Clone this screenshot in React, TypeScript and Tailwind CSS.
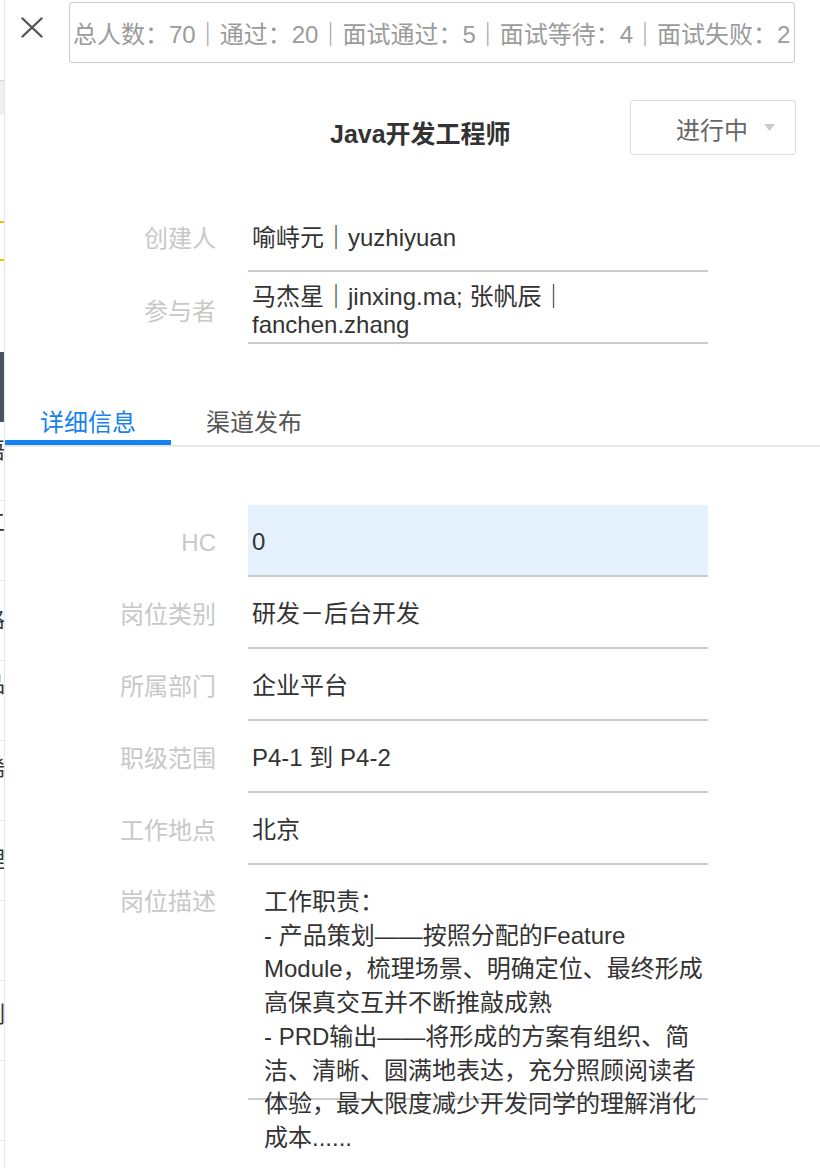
import React from 'react';

const FONT = "font-['Liberation_Sans','Noto_Sans_CJK_SC',sans-serif]";

// sliver of the page behind the drawer, only 4px of it shows
function BackdropStrip() {
  const rows = [
    { pt: 'pt-[18px]', ch: '语', h: 'h-[79px]' },
    { pt: 'pt-[11px]', ch: '工', h: 'h-[80px]' },
    { pt: 'pt-[28px]', ch: '路', h: 'h-[80px]' },
    { pt: 'pt-[13px]', ch: '品', h: 'h-[80px]' },
    { pt: 'pt-[18px]', ch: '稀', h: 'h-[80px]' },
    { pt: 'pt-[28px]', ch: '理', h: 'h-[80px]' },
    { pt: 'pt-[20px]', ch: '', h: 'h-[80px]' },
    { pt: 'pt-[23px]', ch: '列', h: 'h-[80px]' },
    { pt: 'pt-[20px]', ch: '', h: 'h-[80px]' },
  ];
  return (
    <div className="w-[4px] shrink-0 overflow-hidden flex flex-col text-[22px] leading-none text-[#333]">
      <div className="h-[80px] shrink-0" />
      <div className="h-[35px] shrink-0 border-t border-[#d4d4d4] bg-[#f0f0f0]" />
      <div className="h-[106px] shrink-0" />
      <div className="h-[2px] shrink-0 bg-[#f5c400]" />
      <div className="h-[36px] shrink-0" />
      <div className="h-[2px] shrink-0 bg-[#f5c400]" />
      <div className="h-[91px] shrink-0" />
      <div className="h-[70px] shrink-0 bg-[#4b5261]" />
      {rows.map((r, i) => (
        <div key={i} className={`${r.h} ${r.pt} shrink-0 border-b border-dashed border-[#e2e2e2] flex items-start`}>
          <span className="-ml-[17px] whitespace-nowrap">{r.ch}</span>
        </div>
      ))}
    </div>
  );
}

function Row({
  label,
  children,
  highlight,
  shift = 'pt-[3px]',
}: {
  label: string;
  children: React.ReactNode;
  highlight?: boolean;
  shift?: string;
}) {
  return (
    <div className="flex">
      <div className={`w-[211px] h-[72px] ${shift} flex items-center justify-end text-[24px] text-[#c8c8c8]`}>{label}</div>
      <div
        className={`ml-[32px] w-[460px] h-[72px] ${shift} border-b-2 border-[#cccccc] flex items-center pl-[4px] text-[24px] text-[#333] ${
          highlight ? 'bg-[#e5f1fd]' : ''
        }`}
      >
        {children}
      </div>
    </div>
  );
}

export default function App() {
  return (
    <div className={`flex min-h-[1168px] bg-white overflow-hidden ${FONT}`}>
      <BackdropStrip />

      <div className="flex-1 border-l border-[#e6e6e6] flex flex-col">
        {/* header */}
        <div className="flex items-start h-[64px]">
          <div className="w-[64px] pl-[16px] pt-[17px]">
            <svg width="22" height="21" viewBox="0 0 22 21" fill="none" stroke="#555555" strokeWidth="2.4" strokeLinecap="round">
              <path d="M1.5 1.5 L20.5 19.5" />
              <path d="M20.5 1.5 L1.5 19.5" />
            </svg>
          </div>
          <div className="mt-[2px] w-[726px] h-[61px] border border-[#cccccc] rounded-[3px] flex items-center pl-[3px] pt-[4px] overflow-hidden whitespace-nowrap text-[24px] text-[#9b9b9b]">
            总人数：70｜通过：20｜面试通过：5｜面试等待：4｜面试失败：2
          </div>
        </div>

        {/* title + status */}
        <div className="mt-[36px] flex items-center h-[55px]">
          <h1 className="pl-[325px] mt-[14px] text-[25px] font-bold text-[#333]">Java开发工程师</h1>
          <div className="ml-auto mr-[24px] w-[166px] h-[55px] border border-[#dddddd] rounded-[3px] flex items-center justify-end pr-[20px]">
            <span className="mt-[7px] text-[24px] text-[#666]">进行中</span>
            <svg className="ml-[16px]" width="11" height="7" viewBox="0 0 11 7">
              <path d="M0 0 H11 L5.5 7 Z" fill="#cccccc" />
            </svg>
          </div>
        </div>

        {/* people */}
        <div className="mt-[45px] flex flex-col">
          <Row label="创建人" shift="pt-[6px]">
            喻峙元｜yuzhiyuan
          </Row>
          <Row label="参与者" shift="pt-[8px]">
            <span className="leading-[28px]">
              马杰星｜jinxing.ma; 张帆辰｜
              <br />
              fanchen.zhang
            </span>
          </Row>
        </div>

        {/* tabs */}
        <div className="mt-[48px] flex border-b-2 border-[#e8e8e8]">
          <div className="w-[166px] h-[53px] pt-[14px] border-b-[5px] border-[#1482f0] flex items-center justify-center text-[24px] text-[#1482f0]">
            详细信息
          </div>
          <div className="w-[166px] h-[53px] pt-[14px] border-b-[5px] border-transparent flex items-center justify-center text-[24px] text-[#555]">
            渠道发布
          </div>
        </div>

        {/* details */}
        <div className="mt-[58px] flex flex-col">
          <Row label="HC" highlight>
            0
          </Row>
          <Row label="岗位类别">研发－后台开发</Row>
          <Row label="所属部门">企业平台</Row>
          <Row label="职级范围">P4-1 到 P4-2</Row>
          <Row label="工作地点">北京</Row>
          <div className="flex">
            <div className="w-[211px] pt-[20px] text-right text-[24px] leading-[33.7px] text-[#c8c8c8]">岗位描述</div>
            <div className="ml-[32px] w-[460px] h-[235px] border-b-2 border-[#cccccc] pt-[20px] pl-[16px] text-[24px] leading-[33.7px] text-[#333] whitespace-nowrap">
              工作职责：
              <br />- 产品策划——按照分配的Feature
              <br />
              Module，梳理场景、明确定位、最终形成
              <br />
              高保真交互并不断推敲成熟
              <br />- PRD输出——将形成的方案有组织、简
              <br />
              洁、清晰、圆满地表达，充分照顾阅读者
              <br />
              体验，最大限度减少开发同学的理解消化
              <br />
              成本......
            </div>
          </div>
        </div>
      </div>
    </div>
  );
}
